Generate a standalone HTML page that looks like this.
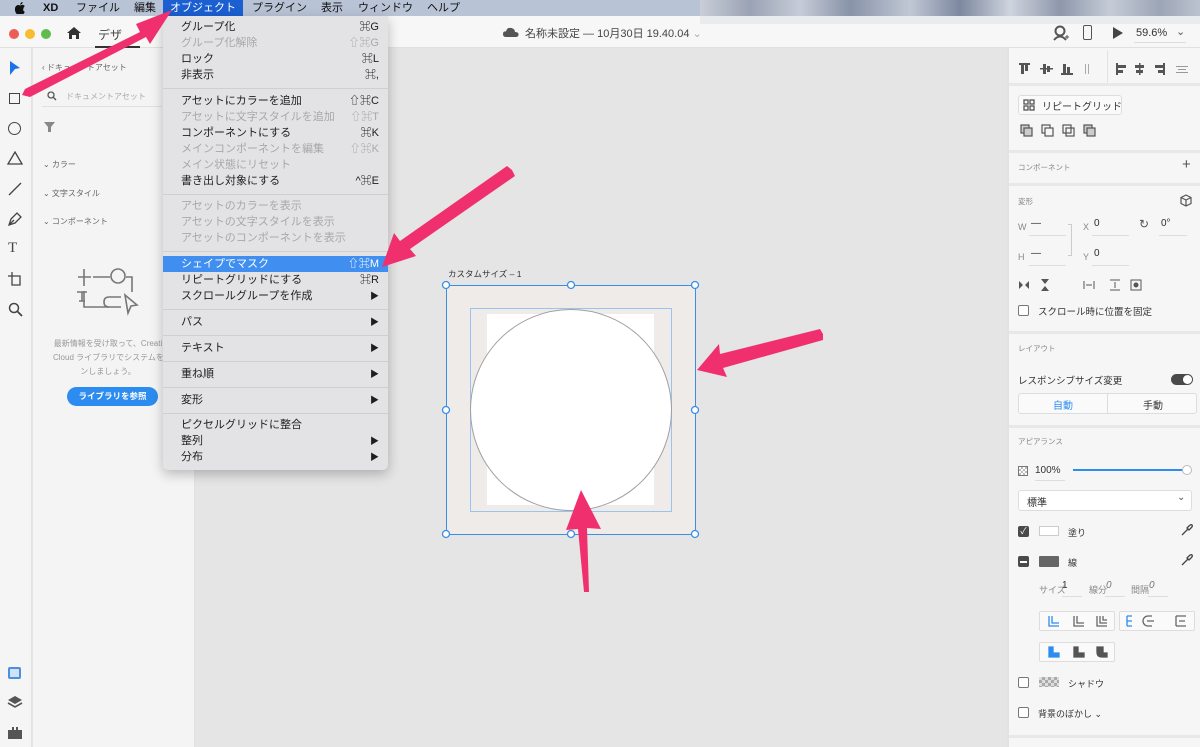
<!DOCTYPE html>
<html><head><meta charset="utf-8"><style>
*{margin:0;padding:0;box-sizing:border-box}
body{width:1200px;height:747px;overflow:hidden;position:relative;background:#e5e5e5;font-family:"Liberation Sans","Noto Sans CJK JP",sans-serif;color:#2c2c2c}
.a{position:absolute}
.t{position:absolute;white-space:nowrap}
.mb{left:0;top:0;width:1200px;height:16px;background:#b9c3d6}
.mb span{position:absolute;top:0;font-size:11px;line-height:16px;color:#111}
.menu{left:163px;top:16px;width:225px;height:454px;background:#e3e3e5;border-radius:0 0 5px 5px;box-shadow:0 4px 12px rgba(0,0,0,.25)}
.mi{position:absolute;left:18px;font-size:11px;line-height:16px;color:#1e1e1e;white-space:nowrap}
.mi.d{color:#a8a8aa}
.sc{position:absolute;right:9px;font-size:11px;line-height:16px;color:#1e1e1e;text-align:right;white-space:nowrap}
.sc.d{color:#a8a8aa}
.sep{position:absolute;left:0;width:225px;height:1px;background:#cfcfd1}
.rp{font-size:9px;color:#888}
.hr{position:absolute;left:1009px;width:191px;height:3px;background:#e8e8e8}
.ul{position:absolute;height:1px;background:#ddd}
</style></head><body>
<!-- menubar -->
<div class="a mb">
<svg class="a" style="left:15px;top:2px" width="11" height="12"><path d="M8.5 6.4c0-1.5 1.2-2.2 1.3-2.3-.7-1-1.8-1.2-2.2-1.2-.9-.1-1.8.6-2.300.6-.5 0-1.2-.5-2-.5C2.200 3 1 3.8.4 5c-1.100 2-.3 4.800.8 6.400.5.8 1.100 1.600 1.900 1.600.8 0 1-.5 2-.5s1.200.5 2 .5 1.300-.8 1.800-1.500c.6-.8.800-1.600.8-1.700 0 0-1.600-.6-1.600-2.400zM7 1.900C7.400 1.400 7.700.7 7.600 0 7 0 6.300.4 5.900.9c-.4.400-.7 1.100-.6 1.800.7 0 1.300-.4 1.700-.8z" fill="#111"/></svg>
<span style="left:43px;font-weight:bold">XD</span>
<span style="left:76px">ファイル</span>
<span style="left:134px">編集</span>
<div class="a" style="left:163px;top:0;width:80px;height:16px;background:#1b5fd1"></div>
<span style="left:170px;color:#fff">オブジェクト</span>
<span style="left:252px">プラグイン</span>
<span style="left:321px">表示</span>
<span style="left:358px">ウィンドウ</span>
<span style="left:427px">ヘルプ</span>
</div>
<!-- pixelated area -->
<div class="a" style="left:700px;top:0;width:500px;height:24px;background:linear-gradient(90deg,#c9ced8 0,#9aa3b4 10%,#c6ccd8 20%,#8893a8 30%,#c1c8d5 42%,#7d889f 52%,#cfd4de 62%,#8e98ab 72%,#c5ccd7 82%,#9ca5b6 92%,#bcc3d0 100%)"></div>
<div class="a" style="left:700px;top:16px;width:500px;height:8px;background:#e9ebef"></div>
<!-- titlebar -->
<div class="a" style="left:0;top:16px;width:700px;height:32px;background:#f7f7f7"></div>
<div class="a" style="left:700px;top:24px;width:500px;height:24px;background:#f7f7f7"></div>
<div class="a" style="left:0;top:47px;width:1200px;height:1px;background:#e0e0e0"></div>
<div class="a" style="left:9px;top:29px;width:10px;height:10px;border-radius:50%;background:#ec5d57"></div>
<div class="a" style="left:25px;top:29px;width:10px;height:10px;border-radius:50%;background:#f5bd2f"></div>
<div class="a" style="left:41px;top:29px;width:10px;height:10px;border-radius:50%;background:#5fbd4e"></div>
<svg class="a" style="left:66px;top:26px" width="16" height="14"><path d="M1 7 L8 1 L15 7 H13 V13 H10 V9 H6 V13 H3 V7Z" fill="#333"/></svg>
<div class="t" style="left:98px;top:26px;font-size:12px;color:#444">デザ</div>
<div class="a" style="left:95px;top:46px;width:45px;height:2px;background:#333"></div>
<svg class="a" style="left:503px;top:27px" width="16" height="11"><path d="M3 10 Q0 10 0 7 Q0 4 3 4.5 Q4 0 8.5 1 Q12 2 12 5 Q16 5 15.5 8 Q15 10 13 10Z" fill="#555"/></svg>
<div class="t" style="left:525px;top:25px;font-size:11px;color:#444">名称未設定 — 10月30日 19.40.04 <span style="color:#aaa">⌄</span></div>
<svg class="a" style="left:1053px;top:25px" width="16" height="16"><circle cx="7" cy="6" r="4.5" fill="none" stroke="#555" stroke-width="2"/><path d="M1 15 Q7 8 13 15" fill="none" stroke="#555" stroke-width="2"/><path d="M12 12h4M14 10v4" stroke="#555"/></svg>
<div class="a" style="left:1083px;top:25px;width:9px;height:15px;border:1.5px solid #555;border-radius:2px"></div>
<svg class="a" style="left:1112px;top:27px" width="12" height="12"><path d="M1 0 L11 6 L1 12Z" fill="#444"/></svg>
<div class="t" style="left:1136px;top:27px;font-size:11px;color:#333">59.6%</div>
<div class="t" style="left:1176px;top:25px;font-size:11px;color:#555">⌄</div>
<div class="a" style="left:1134px;top:42px;width:52px;height:1px;background:#ddd"></div>

<!-- left toolbar -->
<div class="a" style="left:0;top:48px;width:32px;height:699px;background:#f5f5f5;border-right:1px solid #e2e2e2"></div>
<svg class="a" style="left:8px;top:60px" width="14" height="16"><path d="M2 1 L12 8 L7 9 L2 15Z" fill="#1a73e8"/></svg>
<div class="a" style="left:9px;top:93px;width:11px;height:11px;border:1.3px solid #444"></div>
<div class="a" style="left:8px;top:122px;width:13px;height:13px;border:1.3px solid #444;border-radius:50%"></div>
<svg class="a" style="left:7px;top:151px" width="16" height="14"><path d="M8 1 L15 13 H1Z" fill="none" stroke="#444" stroke-width="1.3"/></svg>
<svg class="a" style="left:8px;top:182px" width="14" height="14"><path d="M1 13 L13 1" stroke="#444" stroke-width="1.3"/></svg>
<svg class="a" style="left:7px;top:211px" width="16" height="16"><path d="M2 14 L4 8 L10 2 L14 6 L8 12Z M2 14 L7 9" fill="none" stroke="#444" stroke-width="1.3"/></svg>
<div class="t" style="left:8px;top:240px;font-size:15px;font-family:'Liberation Serif',serif;color:#444">T</div>
<svg class="a" style="left:7px;top:271px" width="16" height="16"><path d="M5 1v4H1 M5 5h8v9H5V5" fill="none" stroke="#444" stroke-width="1.3"/></svg>
<svg class="a" style="left:8px;top:302px" width="15" height="15"><circle cx="6" cy="6" r="4.5" fill="none" stroke="#444" stroke-width="1.5"/><path d="M9.5 9.5 L14 14" stroke="#444" stroke-width="1.8"/></svg>
<div class="a" style="left:8px;top:667px;width:13px;height:12px;border:2px solid #4a90e2;border-radius:2px;background:#cfe2fa"></div>
<svg class="a" style="left:7px;top:695px" width="16" height="14"><path d="M8 1 L15 5 L8 9 L1 5Z" fill="#555"/><path d="M1 8 L8 12 L15 8" fill="none" stroke="#555" stroke-width="1.6"/></svg>
<svg class="a" style="left:8px;top:727px" width="14" height="12"><path d="M0 3h4V0h2v3h2V0h2v3h4v9H0Z" fill="#555"/></svg>

<!-- left panel -->
<div class="a" style="left:33px;top:48px;width:162px;height:699px;background:#f4f4f4;border-right:1px solid #e2e2e2"></div>
<div class="t" style="left:42px;top:62px;font-size:8px;color:#666">‹ ドキュメントアセット</div>
<svg class="a" style="left:47px;top:91px" width="10" height="10"><circle cx="4" cy="4" r="3" fill="none" stroke="#555" stroke-width="1.3"/><path d="M6.5 6.5 9 9" stroke="#555" stroke-width="1.4"/></svg>
<div class="t" style="left:66px;top:91px;font-size:8px;color:#aaa">ドキュメントアセット</div>
<div class="a" style="left:42px;top:106px;width:120px;height:1px;background:#e0e0e0"></div>
<svg class="a" style="left:44px;top:122px" width="11" height="10"><path d="M0 0h11L7 5v5H4V5Z" fill="#888"/></svg>
<div class="t" style="left:43px;top:159px;font-size:8px;color:#666">⌄ カラー</div>
<div class="t" style="left:43px;top:188px;font-size:8px;color:#666">⌄ 文字スタイル</div>
<div class="t" style="left:43px;top:216px;font-size:8px;color:#666">⌄ コンポーネント</div>
<svg class="a" style="left:75px;top:265px" width="75" height="60" fill="none" stroke="#777" stroke-width="1.6"><path d="M3 12h13M9 4v17M18 12h17M51 12h6v15M9 26v16h25"/><circle cx="43" cy="11" r="7"/><path d="M2 27h10M7 27v9M4 36h6"/><path d="M46 32h-12q-5 0-5 5q0 5 5 5h12"/><path d="M50 30 L62 40 L56 41 L53 48Z"/></svg>
<div class="t" style="left:53px;top:337px;font-size:8px;color:#999;line-height:14px;text-align:center;width:110px">最新情報を受け取って、Creati<br>Cloud ライブラリでシステムをデ<br>ンしましょう。</div>
<div class="a" style="left:67px;top:387px;width:91px;height:19px;border-radius:10px;background:#2d8cef;color:#fff;font-size:8.5px;font-weight:bold;text-align:center;line-height:19px">ライブラリを参照</div>

<!-- artboard -->
<div class="t" style="left:448px;top:268px;font-size:8.5px;color:#333">カスタムサイズ – 1</div>
<div class="a" style="left:446px;top:285px;width:249px;height:249px;background:#efebe9"></div>
<div class="a" style="left:487px;top:314px;width:167px;height:191px;background:#fff"></div>
<div class="a" style="left:470px;top:308px;width:202px;height:204px;border:1px solid #9cc3f0"></div>
<div class="a" style="left:470px;top:309px;width:202px;height:202px;border:1px solid #a0a0a0;border-radius:50%;background:#fff"></div>
<div class="a" style="left:446px;top:285px;width:250px;height:250px;border:1.5px solid #3a8ee6"></div>
<svg class="a" style="left:440px;top:279px" width="262" height="262"><g fill="#fff" stroke="#3a8ee6" stroke-width="1.3"><circle cx="6" cy="6" r="3.5"/><circle cx="131" cy="6" r="3.5"/><circle cx="255" cy="6" r="3.5"/><circle cx="6" cy="131" r="3.5"/><circle cx="255" cy="131" r="3.5"/><circle cx="6" cy="255" r="3.5"/><circle cx="131" cy="255" r="3.5"/><circle cx="255" cy="255" r="3.5"/></g></svg>

<!-- right panel -->
<div class="a" style="left:1007px;top:48px;width:193px;height:699px;background:#f6f6f6;border-left:2px solid #e2e2e2"></div>
<svg class="a" style="left:1018px;top:62px" width="180" height="14" fill="#555"><rect x="1" y="1" width="11" height="2"/><rect x="3" y="3" width="3" height="9"/><rect x="7" y="3" width="3" height="6"/><rect x="22" y="6" width="13" height="1.5"/><rect x="25" y="2" width="3" height="10"/><rect x="29" y="4" width="3" height="6"/><rect x="43" y="11" width="12" height="2"/><rect x="45" y="2" width="3" height="9"/><rect x="49" y="5" width="3" height="6"/><rect x="67" y="2" width="1" height="10" fill="#aaa"/><rect x="70" y="2" width="1" height="10" fill="#aaa"/><rect x="98" y="1" width="2" height="12"/><rect x="100" y="3" width="8" height="3"/><rect x="100" y="8" width="5" height="3"/><rect x="121" y="1" width="1.5" height="12"/><rect x="117" y="3" width="9" height="3"/><rect x="118" y="8" width="7" height="3"/><rect x="145" y="1" width="2" height="12"/><rect x="137" y="3" width="8" height="3"/><rect x="140" y="8" width="5" height="3"/><rect x="158" y="4" width="12" height="1" fill="#999"/><rect x="160" y="7" width="8" height="1" fill="#999"/><rect x="158" y="10" width="12" height="1" fill="#999"/></svg>
<div class="a" style="left:1107px;top:50px;width:1px;height:33px;background:#e2e2e2"></div>
<div class="hr" style="top:83px"></div>
<div class="a" style="left:1018px;top:95px;width:104px;height:20px;border:1px solid #ddd;border-radius:3px;background:#fafafa"></div>
<svg class="a" style="left:1023px;top:99px" width="12" height="12" fill="none" stroke="#555" stroke-width="1.3"><rect x="1" y="1" width="4" height="4"/><rect x="7" y="1" width="4" height="4"/><rect x="1" y="7" width="4" height="4"/><rect x="7" y="7" width="4" height="4"/></svg>
<div class="t" style="left:1042px;top:98px;font-size:10px;color:#333">リピートグリッド</div>
<svg class="a" style="left:1020px;top:124px" width="82" height="14" fill="none" stroke="#555" stroke-width="1.2"><rect x="1" y="1" width="8" height="8" fill="#ccc"/><rect x="4" y="4" width="8" height="8" fill="#ccc"/><rect x="22" y="1" width="8" height="8"/><rect x="25" y="4" width="8" height="8" fill="#f6f6f6"/><rect x="43" y="1" width="8" height="8"/><rect x="46" y="4" width="8" height="8"/><rect x="64" y="1" width="8" height="8" fill="#ccc"/><rect x="67" y="4" width="8" height="8" fill="#ccc"/></svg>
<div class="hr" style="top:150px"></div>
<div class="t rp" style="left:1018px;top:162px;font-size:7.5px">コンポーネント</div>
<div class="t" style="left:1182px;top:156px;font-size:15px;color:#555">+</div>
<div class="hr" style="top:183px"></div>
<div class="t rp" style="left:1018px;top:196px;font-size:7.5px">変形</div>
<svg class="a" style="left:1180px;top:194px" width="12" height="13" fill="none" stroke="#555" stroke-width="1.2"><path d="M6 1 L11 3.5 V9.5 L6 12 L1 9.5 V3.5Z M1 3.5 L6 6 L11 3.5 M6 6 V12"/></svg>
<div class="t rp" style="left:1018px;top:222px">W</div><div class="t" style="left:1031px;top:218px;font-size:10px">—</div>
<div class="ul" style="left:1029px;top:235px;width:37px"></div>
<div class="t rp" style="left:1083px;top:222px">X</div><div class="t" style="left:1094px;top:218px;font-size:10px">0</div>
<div class="ul" style="left:1092px;top:235px;width:37px"></div>
<div class="t" style="left:1139px;top:217px;font-size:12px;color:#555">↻</div>
<div class="t" style="left:1161px;top:218px;font-size:10px">0°</div>
<div class="ul" style="left:1159px;top:235px;width:28px"></div>
<div class="a" style="left:1068px;top:224px;width:4px;height:32px;border:1px solid #ccc;border-left:none"></div>
<div class="t rp" style="left:1018px;top:252px">H</div><div class="t" style="left:1031px;top:248px;font-size:10px">—</div>
<div class="ul" style="left:1029px;top:265px;width:37px"></div>
<div class="t rp" style="left:1083px;top:252px">Y</div><div class="t" style="left:1094px;top:248px;font-size:10px">0</div>
<div class="ul" style="left:1092px;top:265px;width:37px"></div>
<svg class="a" style="left:1018px;top:278px" width="125" height="14" fill="#555"><path d="M1 3 L5 7 L1 11Z M11 3 L7 7 L11 11Z"/><path d="M23 1h8L27 6Z M23 13h8L27 8Z"/><path d="M66 3v8M76 3v8M68 7h6" stroke="#555" fill="none"/><path d="M92 2h10M92 12h10M97 4v6" stroke="#555" fill="none"/><rect x="113" y="2" width="10" height="10" fill="none" stroke="#555"/><circle cx="118" cy="7" r="2.5"/></svg>
<div class="a" style="left:1018px;top:305px;width:11px;height:11px;border:1px solid #777;border-radius:2px;background:#fff"></div>
<div class="t" style="left:1038px;top:304px;font-size:9.5px;color:#333">スクロール時に位置を固定</div>
<div class="hr" style="top:331px"></div>
<div class="t rp" style="left:1018px;top:343px;font-size:7.5px">レイアウト</div>
<div class="t" style="left:1018px;top:373px;font-size:9.5px;color:#333">レスポンシブサイズ変更</div>
<div class="a" style="left:1171px;top:374px;width:22px;height:11px;border-radius:6px;background:#4a4a4a"></div>
<div class="a" style="left:1183px;top:375px;width:9px;height:9px;border-radius:50%;background:#fff"></div>
<div class="a" style="left:1018px;top:393px;width:179px;height:21px;border:1px solid #ddd;border-radius:3px;background:#fafafa"></div>
<div class="a" style="left:1107px;top:393px;width:1px;height:21px;background:#ddd"></div>
<div class="t" style="left:1053px;top:397px;font-size:10px;color:#2d8cef">自動</div>
<div class="t" style="left:1143px;top:397px;font-size:10px;color:#333">手動</div>
<div class="hr" style="top:425px"></div>
<div class="t rp" style="left:1018px;top:436px;font-size:7.5px">アピアランス</div>
<div class="a" style="left:1018px;top:466px;width:10px;height:10px;border:1px solid #777;background:repeating-conic-gradient(#bbb 0 25%,#fff 0 50%) 0 0/4px 4px"></div>
<div class="t" style="left:1035px;top:465px;font-size:10px;color:#333">100%</div>
<div class="ul" style="left:1035px;top:480px;width:30px"></div>
<div class="a" style="left:1073px;top:469px;width:114px;height:2px;background:#2d8cef"></div>
<div class="a" style="left:1182px;top:465px;width:10px;height:10px;border-radius:50%;background:#fff;border:1px solid #bbb"></div>
<div class="a" style="left:1018px;top:490px;width:174px;height:21px;border:1px solid #ddd;border-radius:3px;background:#fff"></div>
<div class="t" style="left:1027px;top:494px;font-size:10px;color:#333">標準</div>
<div class="t" style="left:1177px;top:492px;font-size:10px;color:#555">⌄</div>
<div class="a" style="left:1018px;top:526px;width:11px;height:11px;border-radius:2px;background:#4a4a4a;color:#fff;font-size:9px;line-height:11px;text-align:center">✓</div>
<div class="a" style="left:1039px;top:526px;width:20px;height:10px;border:1px solid #ccc;background:#fff"></div>
<div class="t" style="left:1068px;top:526px;font-size:9px;color:#333">塗り</div>
<svg class="a" style="left:1180px;top:524px" width="13" height="13" fill="none" stroke="#444" stroke-width="1.3"><path d="M2 11 L8 5 M7 4 L9 6 M9 2 Q11 0 12 1 Q13 2 11 4 L9 6 L7 4Z"/></svg>
<div class="a" style="left:1018px;top:556px;width:11px;height:11px;border-radius:2px;background:#4a4a4a"></div>
<div class="a" style="left:1020px;top:561px;width:7px;height:2px;background:#fff"></div>
<div class="a" style="left:1039px;top:556px;width:20px;height:11px;background:#666;border-radius:1px"></div>
<div class="t" style="left:1068px;top:556px;font-size:9px;color:#333">線</div>
<svg class="a" style="left:1180px;top:554px" width="13" height="13" fill="none" stroke="#444" stroke-width="1.3"><path d="M2 11 L8 5 M7 4 L9 6 M9 2 Q11 0 12 1 Q13 2 11 4 L9 6 L7 4Z"/></svg>
<div class="t rp" style="left:1039px;top:583px">サイズ</div><div class="t" style="left:1062px;top:580px;font-size:10px;color:#333">1</div>
<div class="ul" style="left:1062px;top:596px;width:20px"></div>
<div class="t rp" style="left:1089px;top:583px">線分</div><div class="t" style="left:1106px;top:580px;font-size:10px;color:#777;font-style:italic">0</div>
<div class="ul" style="left:1105px;top:596px;width:20px"></div>
<div class="t rp" style="left:1131px;top:583px">間隔</div><div class="t" style="left:1149px;top:580px;font-size:10px;color:#777;font-style:italic">0</div>
<div class="ul" style="left:1148px;top:596px;width:20px"></div>
<div class="a" style="left:1039px;top:611px;width:76px;height:20px;border:1px solid #ddd;border-radius:2px;background:#fafafa"></div>
<div class="a" style="left:1119px;top:611px;width:76px;height:20px;border:1px solid #ddd;border-radius:2px;background:#fafafa"></div>
<div class="a" style="left:1039px;top:642px;width:76px;height:20px;border:1px solid #ddd;border-radius:2px;background:#fafafa"></div>
<svg class="a" style="left:1039px;top:611px" width="160" height="52" fill="none" stroke-width="1.3"><path d="M10 5v10h10M13 5v7h7" stroke="#2d8cef"/><path d="M35 5v10h10M38 5v7h7" stroke="#666"/><path d="M58 5v10h10M61 5v7h7M64 5v4h4" stroke="#666"/><path d="M88 5v10M88 5h5M88 10h5M88 15h5" stroke="#2d8cef"/><path d="M113 5h-4a5 5 0 0 0 0 10h4M108 10h7" stroke="#666"/><path d="M137 5h10M137 15h10M137 5v10M140 10h6" stroke="#666"/><path d="M10 36v10h10v-4h-6v-6Z" fill="#2d8cef" stroke="#2d8cef"/><path d="M35 36v10h10v-4h-6v-6Z" fill="#555" stroke="#555"/><path d="M58 36v5q0 5 5 5h5v-4h-4v-6Z" fill="#555" stroke="#555"/></svg>
<div class="a" style="left:1018px;top:677px;width:11px;height:11px;border:1px solid #777;border-radius:2px;background:#fff"></div>
<div class="a" style="left:1039px;top:677px;width:20px;height:10px;background:repeating-conic-gradient(#aaa 0 25%,#ddd 0 50%) 0 0/6px 6px"></div>
<div class="t" style="left:1068px;top:677px;font-size:9px;color:#333">シャドウ</div>
<div class="a" style="left:1018px;top:707px;width:11px;height:11px;border:1px solid #777;border-radius:2px;background:#fff"></div>
<div class="t" style="left:1038px;top:707px;font-size:9px;color:#333">背景のぼかし ⌄</div>
<div class="hr" style="top:735px"></div>

<!-- menu -->
<div class="a menu">
<div class="mi" style="top:3px">グループ化</div><div class="sc" style="top:3px">⌘G</div>
<div class="mi d" style="top:19px">グループ化解除</div><div class="sc d" style="top:19px">⇧⌘G</div>
<div class="mi" style="top:35px">ロック</div><div class="sc" style="top:35px">⌘L</div>
<div class="mi" style="top:51px">非表示</div><div class="sc" style="top:51px">⌘,</div>
<div class="sep" style="top:72px"></div>
<div class="mi" style="top:77px">アセットにカラーを追加</div><div class="sc" style="top:77px">⇧⌘C</div>
<div class="mi d" style="top:93px">アセットに文字スタイルを追加</div><div class="sc d" style="top:93px">⇧⌘T</div>
<div class="mi" style="top:109px">コンポーネントにする</div><div class="sc" style="top:109px">⌘K</div>
<div class="mi d" style="top:125px">メインコンポーネントを編集</div><div class="sc d" style="top:125px">⇧⌘K</div>
<div class="mi d" style="top:141px">メイン状態にリセット</div>
<div class="mi" style="top:157px">書き出し対象にする</div><div class="sc" style="top:157px">^⌘E</div>
<div class="sep" style="top:178px"></div>
<div class="mi d" style="top:182px">アセットのカラーを表示</div>
<div class="mi d" style="top:198px">アセットの文字スタイルを表示</div>
<div class="mi d" style="top:214px">アセットのコンポーネントを表示</div>
<div class="sep" style="top:235px"></div>
<div class="a" style="left:0;top:240px;width:225px;height:16px;background:#3f8ef0"></div>
<div class="mi" style="top:240px;color:#fff">シェイプでマスク</div><div class="sc" style="top:240px;color:#fff">⇧⌘M</div>
<div class="mi" style="top:256px">リピートグリッドにする</div><div class="sc" style="top:256px">⌘R</div>
<div class="mi" style="top:272px">スクロールグループを作成</div><div class="sc" style="top:272px;font-size:9px">▶</div>
<div class="sep" style="top:293px"></div>
<div class="mi" style="top:298px">パス</div><div class="sc" style="top:298px;font-size:9px">▶</div>
<div class="sep" style="top:319px"></div>
<div class="mi" style="top:324px">テキスト</div><div class="sc" style="top:324px;font-size:9px">▶</div>
<div class="sep" style="top:345px"></div>
<div class="mi" style="top:350px">重ね順</div><div class="sc" style="top:350px;font-size:9px">▶</div>
<div class="sep" style="top:371px"></div>
<div class="mi" style="top:376px">変形</div><div class="sc" style="top:376px;font-size:9px">▶</div>
<div class="sep" style="top:397px"></div>
<div class="mi" style="top:401px">ピクセルグリッドに整合</div>
<div class="mi" style="top:417px">整列</div><div class="sc" style="top:417px;font-size:9px">▶</div>
<div class="mi" style="top:433px">分布</div><div class="sc" style="top:433px;font-size:9px">▶</div>
</div>

<!-- arrows -->
<svg class="a" style="left:0;top:0" width="1200" height="747" fill="#f0306e">
<path d="M22 95 L25 89 L140 32 L136 24 L172 10 L150 44 L146 37 L30 97Z"/>
<path d="M512 170 L507 166 L400 241 L394 233 L382 267 L416 256 L410 249 L515 176Z"/>
<path d="M823 334 L820 329 L720 354 L719 344 L697 370 L727 377 L723 368 L823 340Z"/>
<path d="M584 592 L589 592 L587 528 L601 529 L581 490 L566 530 L578 529 Z"/>
</svg>
</body></html>
